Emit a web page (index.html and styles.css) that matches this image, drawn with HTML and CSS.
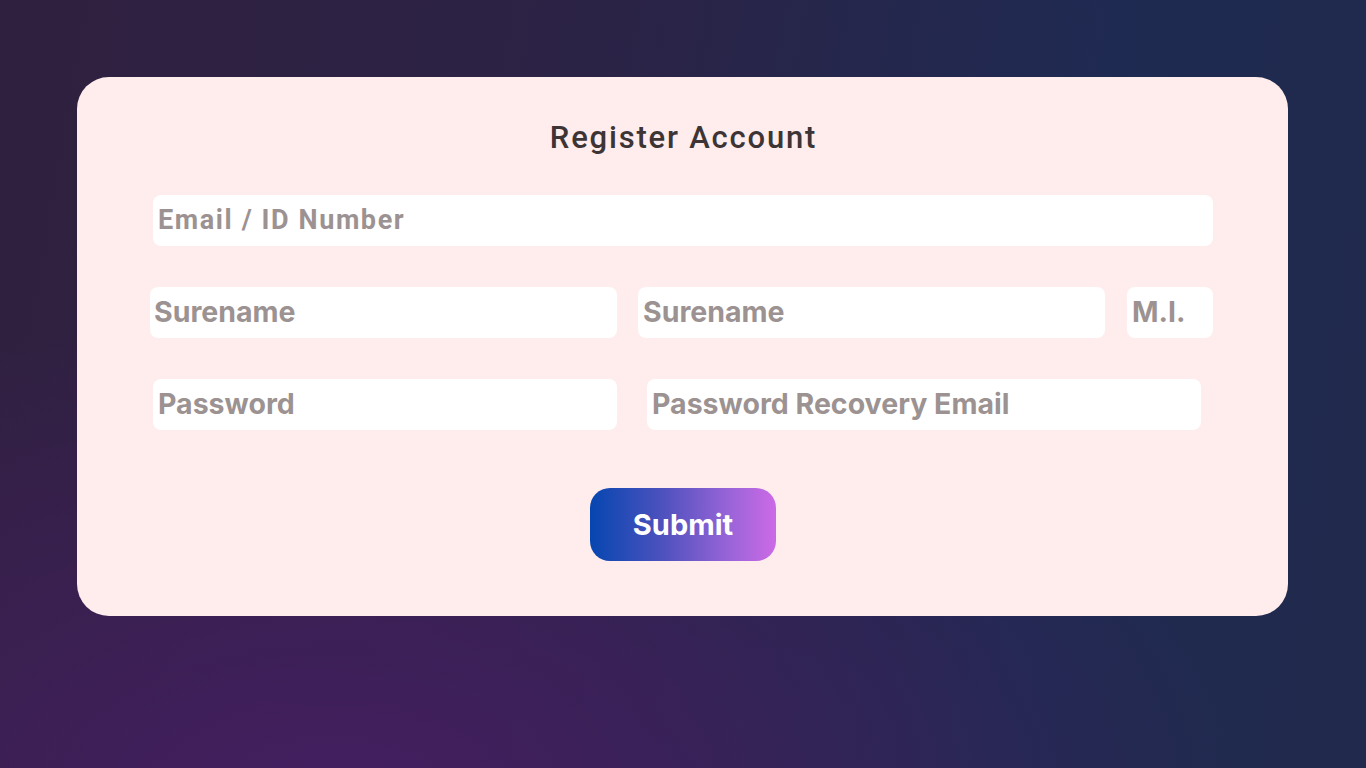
FILE: index.html
```html
<!DOCTYPE html>
<html lang="en">
<head>
<meta charset="utf-8">
<title>Register Account</title>
<link rel="stylesheet" href="styles.css">
</head>
<body>
<main class="card">
  <h1 class="title">Register Account</h1>
  <form class="form">
    <div class="row row-email">
      <input class="field field-email" type="text" placeholder="Email / ID Number">
    </div>
    <div class="row row-name">
      <input class="field field-sur1" type="text" placeholder="Surename">
      <input class="field field-sur2" type="text" placeholder="Surename">
      <input class="field field-mi" type="text" placeholder="M.I.">
    </div>
    <div class="row row-pass">
      <input class="field field-pass" type="password" placeholder="Password">
      <input class="field field-recovery" type="text" placeholder="Password Recovery Email">
    </div>
    <div class="row row-submit">
      <button class="submit" type="button">Submit</button>
    </div>
  </form>
</main>
</body>
</html>
```

FILE: styles.css
```css
* { box-sizing: border-box; }
html, body { margin: 0; height: 100%; }
body {
  width: 1366px;
  height: 768px;
  overflow: hidden;
  padding: 77px 78px 0 77px;
  font-family: "Inter", "Liberation Sans", sans-serif;
  background:
    radial-gradient(ellipse 900px 500px at 25% 105%, rgba(70, 30, 98, 0.95), rgba(70, 30, 98, 0) 100%),
    linear-gradient(100deg, #30203f 0%, #2b2346 40%, #1f2a52 75%, #212a4c 100%);
}
.card {
  width: 1211px;
  height: 539px;
  background: #ffecec;
  border-radius: 32px;
  padding-top: 41px;
  display: flex;
  flex-direction: column;
}
.title {
  margin: 0;
  text-align: center;
  font-family: "Roboto", "Liberation Sans", sans-serif;
  font-weight: 500;
  font-size: 31px;
  line-height: 40px;
  letter-spacing: 1.8px;
  padding-left: 2px;
  color: #3d3535;
}
.form {
  display: flex;
  flex-direction: column;
  margin-top: 37px;
}
.row { display: flex; }
.field {
  height: 51px;
  border: none;
  outline: none;
  background: #ffffff;
  border-radius: 8px;
  padding: 0 5px 3px;
  font-family: "Inter", "Liberation Sans", sans-serif;
  font-weight: 700;
  font-size: 28.5px;
  color: #9c9292;
}
.field::placeholder { color: #9c9292; opacity: 1; }
.row-email { padding-left: 76px; }
.field-email {
  width: 1060px;
  padding-bottom: 1px;
  font-family: "Roboto", "Liberation Sans", sans-serif;
  font-weight: 700;
  font-size: 27px;
  letter-spacing: 1.6px;
}
.row-name { margin-top: 41px; padding-left: 73px; }
.field-sur1 { width: 467px; padding-left: 4px; }
.field-sur2 { width: 467px; margin-left: 21px; }
.field-mi { width: 86px; margin-left: 22px; }
.row-pass { margin-top: 41px; padding-left: 76px; }
.field-pass { width: 464px; }
.field-recovery { width: 554px; margin-left: 30px; }
.row-submit { margin-top: 58px; justify-content: center; padding-left: 1px; }
.submit {
  width: 186px;
  height: 73px;
  border: none;
  border-radius: 20px;
  background: linear-gradient(90deg, #0646b0 0%, #4f52be 40%, #9a64d8 75%, #cc6ae6 100%);
  color: #ffffff;
  font-family: "Inter", "Liberation Sans", sans-serif;
  font-weight: 700;
  font-size: 29px;
  cursor: pointer;
}
```
